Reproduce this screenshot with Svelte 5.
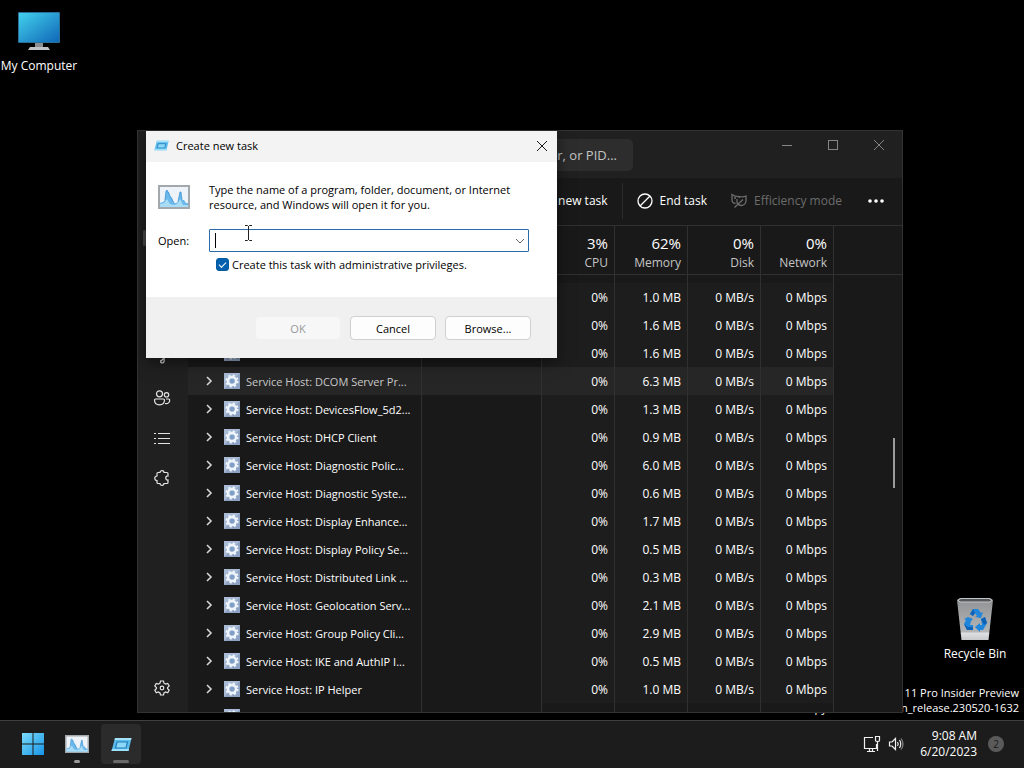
<script>
	const services = [
		{ name: "", memory: "1.0 MB" },
		{ name: "", memory: "1.6 MB" },
		{ name: "", memory: "1.6 MB" },
		{ name: "Service Host: DCOM Server Pr...", memory: "6.3 MB", hovered: true },
		{ name: "Service Host: DevicesFlow_5d2...", memory: "1.3 MB" },
		{ name: "Service Host: DHCP Client", memory: "0.9 MB" },
		{ name: "Service Host: Diagnostic Polic...", memory: "6.0 MB" },
		{ name: "Service Host: Diagnostic Syste...", memory: "0.6 MB" },
		{ name: "Service Host: Display Enhance...", memory: "1.7 MB" },
		{ name: "Service Host: Display Policy Se...", memory: "0.5 MB" },
		{ name: "Service Host: Distributed Link ...", memory: "0.3 MB" },
		{ name: "Service Host: Geolocation Serv...", memory: "2.1 MB" },
		{ name: "Service Host: Group Policy Cli...", memory: "2.9 MB" },
		{ name: "Service Host: IKE and AuthIP I...", memory: "0.5 MB" },
		{ name: "Service Host: IP Helper", memory: "1.0 MB" }
	];
	const totals = [
		{ value: "3%", label: "CPU" },
		{ value: "62%", label: "Memory" },
		{ value: "0%", label: "Disk" },
		{ value: "0%", label: "Network" }
	];
	let command = $state("");
	let admin = $state(true);
</script>

{#snippet gearTile()}
	<svg class="tile" width="16" height="16" viewBox="0 0 16 16">
		<rect width="16" height="16" fill="#8ea3c4" />
		<path d="M0 0H16L0 16Z" fill="#a9bad5" />
		<circle cx="8" cy="8" r="4" fill="none" stroke="#eef5fc" stroke-width="2.4" />
		<circle cx="8" cy="8" r="5.6" fill="none" stroke="#eef5fc" stroke-width="2" stroke-dasharray="2.2 2.2" />
		<circle cx="8" cy="8" r="2.2" fill="#7f9fc8" />
	</svg>
{/snippet}

{#snippet graphIcon(w, h)}
	<svg width={w} height={h} viewBox="0 0 32 24">
		<rect x="1" y="1" width="30" height="22" fill="#edf3f8" stroke="#a3a8ac" stroke-width="2" />
		<path d="M2 18L5 17L7 15L8 6L9 5L10 7L11 7L12 11L14 13L16 18L18 18L20 17L22 7L23 7L24 15L26 15L28 18L30 18V22H2Z" fill="#6bb8ea" />
		<path d="M2 22V19L6 18L9 14L12 19L16 20L19 19L22 14L25 20L30 20V22Z" fill="#a9dcf5" />
		<path d="M7 15L8 6L9 5L12 11L16 18M20 17L22 7L23 7L24 15" fill="none" stroke="#3f93d6" stroke-width="0.8" />
	</svg>
{/snippet}

{#snippet runIcon(w, h)}
	<svg width={w} height={h} viewBox="0 0 21 15">
		<path d="M4 1H20.5L17.5 14H0.5Z" fill="#5cbcec" />
		<path d="M4 1H20.5L20 3H3.5Z" fill="#a4e2fa" />
		<path d="M6 5H16.5L15 11H4.5Z" fill="#8ed8f7" stroke="#1f7fbd" stroke-width="1.2" />
		<path d="M1 12H18L17.5 14H0.5Z" fill="#9ce0fb" />
	</svg>
{/snippet}

<main>
	<section class="desktop">
		<a class="shortcut computer" href="#computer">
			<svg width="44" height="40" viewBox="0 0 44 40">
				<defs>
					<linearGradient id="screen" x1="0" y1="0" x2="1" y2="1">
						<stop offset="0" stop-color="#42d0ec" />
						<stop offset="1" stop-color="#1068b8" />
					</linearGradient>
				</defs>
				<rect x="1" y="1" width="42" height="31" rx="1" fill="#2a6f96" />
				<rect x="2" y="2" width="40" height="29" fill="url(#screen)" />
				<path d="M18 32H26V36H18Z" fill="#8a8e92" />
				<path d="M13 36H31L33 39H11Z" fill="#bfc3c6" />
			</svg>
			<span>My Computer</span>
		</a>

		<a class="shortcut bin" href="#bin">
			<svg width="38" height="44" viewBox="0 0 38 44">
				<defs>
					<linearGradient id="can" x1="0" y1="0" x2="0" y2="1">
						<stop offset="0" stop-color="#8f9192" />
						<stop offset="0.8" stop-color="#b3b5b6" />
						<stop offset="0.84" stop-color="#dedfe0" />
						<stop offset="1" stop-color="#c8c9ca" />
					</linearGradient>
				</defs>
				<path d="M1 3L4 1H34L37 3L32.500 43H5.500Z" fill="url(#can)" />
				<path d="M2 3L5 1.500H33L36 3L34 5H4Z" fill="#55585a" stroke="#c4c6c7" stroke-width="1" />
				<g fill="#1f86dc">
					<path d="M14 17L17 12H22L25 16L27 15L25 21L19 20L21 19L19 16L17 19Z" />
					<path d="M12 20L17 22L15 24L14 28H17V33H11L8 27L10 23L8 22Z" />
					<path d="M25 22L29 20L31 26L27 33H24V35L19 30L24 26V28H26Z" />
				</g>
				<path d="M14 17L17 12L19 16L17 19ZM8 27L11 33H17V30H12ZM29 20L31 26L28 28L25 22Z" fill="#0f62b8" />
			</svg>
			<span>Recycle Bin</span>
		</a>

		<p class="watermark">Windows 11 Pro Insider Preview<br />Evaluation copy. Build 25375.zn_release.230520-1632</p>

		<section class="manager">
			<header class="titlebar">
				<input class="search" type="text" aria-label="Search" placeholder="Type a name, publisher, or PID..." />
				<div class="controls">
					<button aria-label="Minimize"><svg width="12" height="12"><path d="M1 6.500H11" /></svg></button>
					<button aria-label="Maximize"><svg width="12" height="12"><rect x="1.500" y="1.500" width="9" height="9" /></svg></button>
					<button aria-label="Close"><svg width="12" height="12"><path d="M1 1L11 11M11 1L1 11" /></svg></button>
				</div>
			</header>

			<div class="body">
				<nav>
					<button aria-label="Menu"></button>
					<button class="current" aria-label="Processes"></button>
					<button aria-label="Performance"></button>
					<button aria-label="App history"></button>
					<button aria-label="Startup apps">
						<svg width="18" height="18" viewBox="0 0 18 18"><path d="M3 9A7 7 0 0 1 16 9M8 12L12 8M11 9Q12 14 9 14Q7 14 8 11" /></svg>
					</button>
					<button aria-label="Users">
						<svg width="18" height="18" viewBox="0 0 18 18">
							<circle cx="6.500" cy="4.800" r="3" />
							<circle cx="13.500" cy="5.800" r="2.200" />
							<path d="M2.500 10H10.500Q11.500 10 11.500 11C11.500 14 9.500 15.800 6.500 15.800S1.500 14 1.500 11Q1.500 10 2.500 10ZM13 10H15.800Q16.700 10 16.700 11C16.700 13.500 15 15 12 14.500" />
						</svg>
					</button>
					<button aria-label="Details">
						<svg width="18" height="18" viewBox="0 0 18 18"><path d="M5 4.500H17M5 9.500H17M5 14.500H17M1 4.500H3M1 9.500H3M1 14.500H3" /></svg>
					</button>
					<button aria-label="Services">
						<svg width="18" height="18" viewBox="0 0 18 18">
							<path d="M5 3.500H7C7 1 11 1 11 3.500H14Q15 3.500 15 4.500V7C12 6.500 12 11.500 15 11V13.500Q15 14.500 14 14.500H11C11 17 7 17 7 14.500H5Q4 14.500 4 13.500V11.500C1 11.500 1 7 4 7V4.500Q4 3.500 5 3.500Z" />
						</svg>
					</button>
					<button class="settings" aria-label="Settings">
						<svg width="18" height="18" viewBox="0 0 18 18">
							<path d="M7.500 2H10.500L11 4.200L12.600 5.100L14.700 4.400L16.200 7L14.600 8.500V9.700L16.200 11.100L14.700 13.700L12.600 13L11 14L10.500 16H7.500L7 14L5.400 13L3.300 13.700L1.800 11.100L3.400 9.700V8.500L1.800 7L3.300 4.400L5.400 5.100L7 4.200Z" />
							<circle cx="9" cy="9" r="1.800" />
						</svg>
					</button>
				</nav>

				<div class="content">
					<div class="toolbar">
						<button class="run">Run new task</button>
						<button class="end">
							<svg width="16" height="16" viewBox="0 0 16 16"><circle cx="8" cy="8" r="7" /><path d="M3 13L13 3" /></svg>
							End task
						</button>
						<button class="efficiency" disabled>
							<svg width="16" height="16" viewBox="0 0 16 16">
								<path d="M8.500 3.500Q4.500 4 1 1.500V7Q1 10 4.500 10.500M8.500 5V3.500Q12 4.500 15 3V8Q14.500 12 10.500 12.500Q7 12.500 6 9.500V6M3.500 14.500L12 6.500M3 5H5" />
							</svg>
							Efficiency mode
						</button>
						<button class="more" aria-label="More"><svg width="16" height="4"><circle cx="2" cy="2" r="1.800" /><circle cx="8" cy="2" r="1.800" /><circle cx="14" cy="2" r="1.800" /></svg></button>
					</div>

					<div class="processes">
						<table>
							<thead>
								<tr>
									<th class="name"></th>
									<th class="status"></th>
									{#each totals as total}
										<th class="usage"><strong>{total.value}</strong>{total.label}</th>
									{/each}
									<th class="rest"></th>
								</tr>
							</thead>
							<tbody>
								<tr class="gap"><td></td><td></td><td></td><td></td><td></td><td></td><td class="rest"></td></tr>
								{#each services as service}
									<tr class:hovered={service.hovered}>
										<td>
											<div class="service">
												<svg class="chevron" width="8" height="10"><path d="M2 1L6 5L2 9" /></svg>
												{@render gearTile()}
												<span>{service.name}</span>
											</div>
										</td>
										<td></td>
										<td class="number">0%</td>
										<td class="number">{service.memory}</td>
										<td class="number">0 MB/s</td>
										<td class="number">0 Mbps</td>
										<td class="rest"></td>
									</tr>
								{/each}
								<tr>
									<td><div class="service"><svg class="chevron" width="8" height="10"></svg>{@render gearTile()}</div></td>
									<td></td><td></td><td></td><td></td><td></td><td class="rest"></td>
								</tr>
							</tbody>
						</table>
						<div class="thumb"></div>
					</div>
				</div>
			</div>
		</section>

		<form class="dialog" onsubmit={(e) => e.preventDefault()}>
			<header>
				{@render runIcon(15, 11)}
				<h1>Create new task</h1>
				<button type="button" aria-label="Close"><svg width="12" height="12"><path d="M1 1L11 11M11 1L1 11" /></svg></button>
			</header>
			<div class="fields">
				{@render graphIcon(32, 24)}
				<p>Type the name of a program, folder, document, or Internet resource, and Windows will open it for you.</p>
				<label for="command">Open:</label>
				<div class="combo">
					<input id="command" type="text" bind:value={command} />
					<button type="button" aria-label="Recent tasks"><svg width="10" height="6"><path d="M1 1L5 5L9 1" /></svg></button>
					<span class="caret"></span>
					<svg class="pointer" width="9" height="16"><path d="M1 0.500H3.500L4.500 1.500L5.500 0.500H8M4.500 1V15M1 15.500H3.500L4.500 14.500L5.500 15.500H8" /></svg>
				</div>
				<label class="admin"><input type="checkbox" bind:checked={admin} />Create this task with administrative privileges.</label>
			</div>
			<footer>
				<button disabled>OK</button>
				<button type="button">Cancel</button>
				<button type="button">Browse...</button>
			</footer>
		</form>
	</section>

	<footer class="taskbar">
		<button class="app" aria-label="Start">
			<svg width="24" height="24" viewBox="0 0 24 24">
				<defs>
					<linearGradient id="start" x1="0" y1="0" x2="24" y2="24" gradientUnits="userSpaceOnUse">
						<stop offset="0" stop-color="#7fe0fb" />
						<stop offset="1" stop-color="#1290e6" />
					</linearGradient>
				</defs>
				<path d="M1 1H11.500V11.500H1ZM12.500 1H23V11.500H12.500ZM1 12.500H11.500V23H1ZM12.500 12.500H23V23H12.500Z" fill="url(#start)" />
			</svg>
		</button>
		<button class="app running" aria-label="Task Manager">{@render graphIcon(24, 18)}</button>
		<button class="app active" aria-label="Create new task">{@render runIcon(21, 15)}</button>
		<div class="tray">
			<svg width="18" height="18" viewBox="0 0 18 18">
				<path d="M10 2.500H1.500V13.500H13.500V9M4 16.500H12M6.500 14V16M9.500 14V16M12.500 1.500H16.500V5.500Q16.500 6.500 14.500 6.500T12.500 5.500ZM14.500 7V16" />
			</svg>
			<svg width="16" height="16" viewBox="0 0 16 16">
				<path d="M1.500 6H4L7.500 2.500V13.500L4 10H1.500ZM9.500 6Q11 8 9.500 10M11.500 4Q14 8 11.500 12" />
				<path d="M13 2.500Q17 8 13 13.500" opacity="0.5" />
			</svg>
			<time>9:08 AM<br />6/20/2023</time>
			<span class="badge">2</span>
		</div>
	</footer>
</main>

<style>
	:global(body) {
		background-color: #000;
	}
	main {
		display: flex;
		flex-direction: column;
		height: 100vh;
		overflow: hidden;
		font-family: "Open Sans", "Noto Sans", sans-serif;
		font-size: 12px;
		line-height: 15px;
		color: #fff;
	}
	button, input {
		font: inherit;
		color: inherit;
		box-sizing: border-box;
		margin: 0;
		padding: 0;
		border: none;
		background: none;
		outline: none;
	}
	p, h1 {
		margin: 0;
		font-size: 11px;
		font-weight: normal;
	}
	svg {
		flex: none;
		display: block;
	}
	.desktop {
		position: relative;
		flex: 1;
		min-height: 0;
	}
	.shortcut {
		position: absolute;
		display: flex;
		flex-direction: column;
		align-items: center;
		gap: 7px;
		width: 78px;
		color: #fff;
		text-decoration: none;
		white-space: nowrap;
	}
	.computer {
		left: 0;
		top: 11px;
	}
	.bin {
		right: 10px;
		bottom: 59px;
		gap: 5px;
	}
	.watermark {
		position: absolute;
		right: 5px;
		bottom: 5px;
		text-align: right;
	}

	/* task manager */
	.manager {
		position: absolute;
		inset: 130px 121px 7px 137px;
		display: flex;
		flex-direction: column;
		box-sizing: border-box;
		border: 1px solid #333;
		background-color: #202020;
		overflow: hidden;
	}
	.titlebar {
		display: flex;
		flex: none;
		align-items: flex-start;
		height: 47px;
		padding-left: 205px;
	}
	.search {
		width: 290px;
		height: 32px;
		margin-top: 8px;
		padding-right: 16px;
		border-radius: 5px;
		background-color: #2d2d2d;
		font-size: 13px;
		text-align: right;
	}
	.search::placeholder {
		color: #c4c4c4;
	}
	.controls {
		display: flex;
		margin-left: auto;
	}
	.controls button {
		display: grid;
		place-items: center;
		width: 46px;
		height: 28px;
	}
	.controls svg {
		fill: none;
		stroke: #858585;
	}
	.body {
		display: flex;
		flex: 1;
		min-height: 0;
	}
	nav {
		display: flex;
		flex-direction: column;
		width: 50px;
		padding-bottom: 4px;
	}
	nav button {
		display: grid;
		flex: none;
		place-items: center;
		height: 40px;
		padding-right: 2px;
	}
	nav svg {
		fill: none;
		stroke: #e4e4e4;
		stroke-width: 1.2;
	}
	nav .current::before {
		content: "";
		justify-self: start;
		width: 3px;
		height: 16px;
		margin-left: 5px;
		border-radius: 2px;
		background-color: #4a4a4a;
	}
	nav .settings {
		margin-top: auto;
	}
	.content {
		display: flex;
		flex: 1;
		flex-direction: column;
		min-width: 0;
		background-color: #191919;
	}
	.toolbar {
		display: flex;
		flex: none;
		align-items: center;
		justify-content: flex-end;
		box-sizing: border-box;
		height: 47px;
		padding: 0 18px 2px 0;
	}
	.toolbar button {
		display: flex;
		align-items: center;
		gap: 7px;
		height: 36px;
	}
	.toolbar svg {
		fill: none;
		stroke: currentColor;
		stroke-width: 1.3;
	}
	.toolbar .run {
		padding-right: 14px;
		border-right: 1px solid #2b2b2b;
	}
	.toolbar .end {
		padding: 0 24px 0 14px;
	}
	.toolbar .efficiency {
		padding-right: 26px;
		color: #6c6c6c;
	}
	.toolbar .more svg {
		fill: #fff;
		stroke: none;
	}
	.processes {
		position: relative;
		flex: 1;
		min-height: 0;
		overflow: hidden;
	}
	table {
		width: 100%;
		table-layout: fixed;
		border-collapse: separate;
		border-spacing: 0;
	}
	th, td {
		box-sizing: border-box;
		padding: 0;
		border-right: 1px solid #303030;
		font-weight: normal;
		white-space: nowrap;
	}
	th {
		height: 50px;
		border-top: 1px solid #303030;
		border-bottom: 1px solid #303030;
		color: #c4c4c4;
	}
	td {
		height: 28px;
	}
	.name {
		width: 234px;
	}
	.status {
		width: 120px;
	}
	.usage {
		width: 73px;
		padding: 0 6px 0 0;
		text-align: right;
	}
	.usage strong {
		display: block;
		color: #fff;
		font-size: 15px;
		font-weight: normal;
		line-height: 24px;
	}
	.number {
		padding-right: 6px;
		background-color: #1d1d1d;
		text-align: right;
	}
	.rest {
		border-right: none;
	}
	.gap td {
		height: 8px;
	}
	.hovered td:not(.rest) {
		background-color: #262626;
	}
	.hovered .service {
		color: #c9c9c9;
	}
	.service {
		display: flex;
		align-items: center;
		padding-left: 17px;
		font-size: 11px;
	}
	.chevron {
		margin-right: 11px;
		fill: none;
		stroke: #d4d4d4;
		stroke-width: 1.6;
	}
	.tile {
		margin-right: 6px;
	}
	.thumb {
		position: absolute;
		right: 7px;
		top: 213px;
		width: 2px;
		height: 50px;
		background-color: #9b9b9b;
	}

	/* create new task */
	.dialog {
		position: absolute;
		left: 146px;
		top: 131px;
		width: 411px;
		background-color: #fff;
		color: #000;
		font-size: 11px;
		box-shadow: 0 4px 14px rgba(0, 0, 0, 0.5);
	}
	.dialog header {
		display: flex;
		align-items: center;
		gap: 7px;
		box-sizing: border-box;
		height: 31px;
		padding: 0 0 2px 8px;
		background-color: #f3f3f3;
	}
	.dialog header button {
		display: grid;
		place-items: center;
		width: 30px;
		height: 28px;
		margin-left: auto;
	}
	.dialog header button svg {
		fill: none;
		stroke: #1a1a1a;
	}
	.fields {
		display: grid;
		grid-template-columns: 51px 1fr;
		align-items: center;
		padding: 20px 28px 25px 12px;
	}
	.fields p {
		white-space: normal;
	}
	.combo {
		position: relative;
		display: flex;
		box-sizing: border-box;
		height: 23px;
		margin-top: 17px;
		border: 1px solid #2a6ca8;
		border-radius: 1px;
	}
	.fields > label:not(.admin) {
		margin-top: 17px;
	}
	.combo input {
		flex: 1;
		min-width: 0;
		padding: 0 5px;
	}
	.combo button {
		display: grid;
		place-items: center;
		width: 17px;
	}
	.combo button svg {
		fill: none;
		stroke: #666;
	}
	.caret {
		position: absolute;
		left: 5px;
		top: 3px;
		width: 1px;
		height: 15px;
		background-color: #000;
	}
	.pointer {
		position: absolute;
		left: 34px;
		top: -5px;
		fill: none;
		stroke: #222;
	}
	.admin {
		display: flex;
		grid-column: 2;
		align-items: center;
		gap: 3px;
		margin-top: 5px;
		padding-left: 7px;
		white-space: nowrap;
	}
	.admin input {
		display: grid;
		place-items: center;
		appearance: none;
		width: 13px;
		height: 13px;
		border: 1px solid #005a9e;
		border-radius: 3px;
	}
	.admin input:checked {
		background-color: #0560b0;
	}
	.admin input:checked::before {
		content: "";
		width: 6px;
		height: 3px;
		margin-bottom: 2px;
		border-left: 1px solid #fff;
		border-bottom: 1px solid #fff;
		transform: rotate(-45deg);
	}
	.dialog footer {
		display: flex;
		justify-content: flex-end;
		gap: 9px;
		padding: 19px 26px 18px;
		background-color: #f0f0f0;
	}
	.dialog footer button {
		width: 86px;
		height: 24px;
		border: 1px solid #d0d0d0;
		border-radius: 4px;
		background-color: #fdfdfd;
	}
	.dialog footer button:disabled {
		border-color: #f0f0f0;
		background-color: #f7f7f7;
		color: #999;
	}

	.taskbar {
		display: flex;
		flex: none;
		align-items: center;
		gap: 4px;
		box-sizing: border-box;
		height: 48px;
		padding: 0 20px 1px 13px;
		border-top: 1px solid #404040;
		background-color: #1c1c1c;
	}
	.app {
		position: relative;
		display: grid;
		place-items: center;
		width: 40px;
		height: 40px;
		border-radius: 4px;
	}
	.app.active {
		background-color: #2b2b2b;
	}
	.app.running::after, .app.active::after {
		content: "";
		position: absolute;
		bottom: 1px;
		width: 6px;
		height: 3px;
		border-radius: 2px;
		background-color: #9a9a9a;
	}
	.app.active::after {
		width: 16px;
		background-color: #6a6a6a;
	}
	.tray {
		display: flex;
		align-items: center;
		gap: 7px;
		margin-left: auto;
	}
	.tray svg {
		fill: none;
		stroke: #f0f0f0;
		stroke-width: 1.2;
	}
	time {
		width: 66px;
		line-height: 16px;
		text-align: right;
	}
	.badge {
		width: 16px;
		margin-left: 4px;
		border-radius: 8px;
		background-color: #5a5a5a;
		color: #1c1c1c;
		font-size: 10px;
		line-height: 16px;
		text-align: center;
	}
</style>
